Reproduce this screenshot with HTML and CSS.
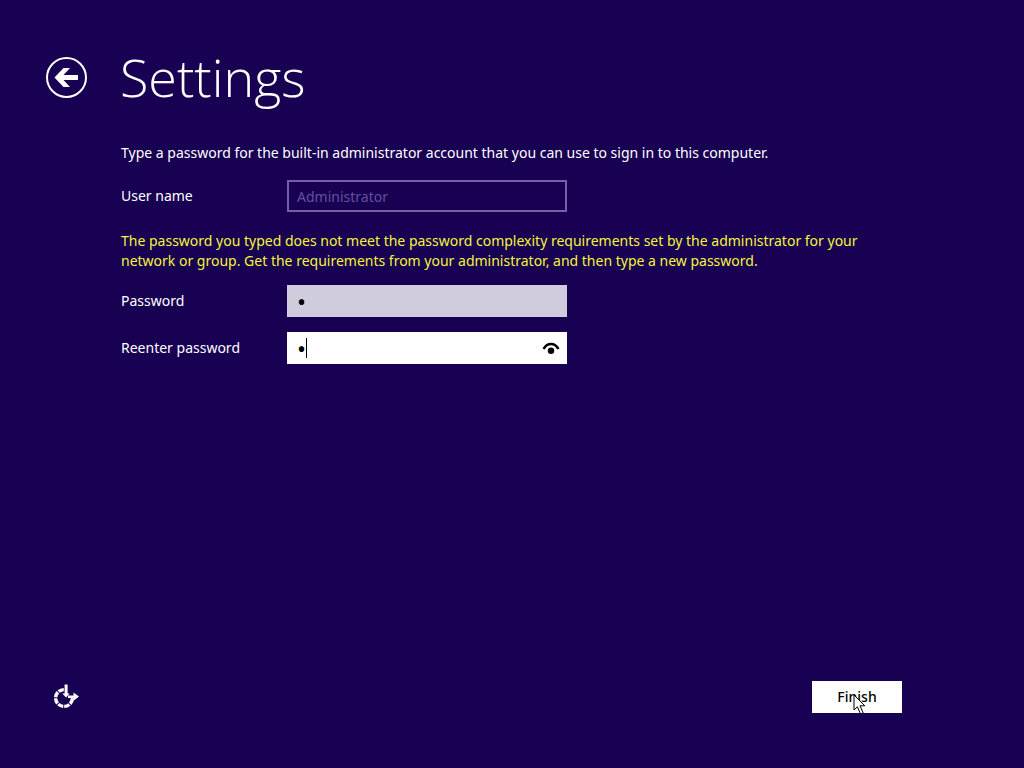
FILE: index.html
```html
<!DOCTYPE html>
<html lang="en">
<head>
    <meta charset="UTF-8">
    <meta name="viewport" content="width=device-width, initial-scale=1.0">
    <title>Settings</title>
    <link rel="stylesheet" href="styles.css">
</head>
<body>
    <form class="page">
        <header class="page-header">
            <button type="button" class="back-button" aria-label="Back">
                <svg width="42" height="42" viewBox="0 0 42 42">
                    <circle cx="21.5" cy="21.5" r="19.5" fill="none" stroke="#fff" stroke-width="2"/>
                    <path d="M9.5 21.5 L18.5 12 H25 L18.5 19 H33 V24 H18.5 L25 31 H18.5 Z" fill="#fff"/>
                </svg>
            </button>
            <h1>Settings</h1>
        </header>

        <main class="content">
            <p class="intro">Type a password for the built-in administrator account that you can use to sign in to this computer.</p>

            <div class="field">
                <label for="userName">User name</label>
                <input type="text" id="userName" value="Administrator" disabled>
            </div>

            <!-- Validation message -->
            <p class="error">The password you typed does not meet the password complexity requirements set by the administrator for your network or group. Get the requirements from your administrator, and then type a new password.</p>

            <div class="field">
                <label for="password">Password</label>
                <input type="password" id="password" value="a">
            </div>
            <div class="field">
                <label for="password2">Reenter password</label>
                <div class="reveal-box">
                    <input type="password" id="password2" class="active" value="a">
                    <span class="caret"></span>
                    <button type="button" class="reveal-button" aria-label="Show password">
                        <svg width="18" height="14" viewBox="0 0 18 14">
                            <path d="M1.6 8 C5 1.4 13 1.4 16.4 8" fill="none" stroke="#000" stroke-width="2.6"/>
                            <circle cx="9" cy="9.8" r="3.2"/>
                        </svg>
                    </button>
                </div>
            </div>
        </main>

        <footer class="page-footer">
            <button type="button" class="access-button" aria-label="Ease of access">
                <svg width="28" height="28" viewBox="0 0 28 28">
                    <!-- dashed ring, open at the upper right -->
                    <circle cx="12" cy="15" r="8.4" fill="none" stroke="#fff" stroke-width="3.4" pathLength="80" stroke-dasharray="8.5 1.5 8.5 1.5 8.5 1.5 8.5 1.5 8.5 1.5 8.5 20.5" transform="rotate(5 12 15)"/>
                    <path d="M12.6 1.5 H15.6 V10.5 H17.6 L14.1 14.5 L10.2 10.5 H12.6 Z" fill="#fff"/>
                    <path d="M16 12.4 H21.5 V9.4 L27 13.6 L21.5 17.8 V15 H16 Z" fill="#fff"/>
                </svg>
            </button>
            <button type="button" class="finish-button">Finish
                <svg class="pointer" width="13" height="21" viewBox="0 0 13 21">
                    <path d="M1 1 V16 L4.4 12.8 L7.6 20 L10.2 18.9 L7 11.8 H11.8 Z" fill="#fff" stroke="#000"/>
                </svg>
            </button>
        </footer>
    </form>
</body>
</html>
```
FILE: styles.css
```css
* {
    box-sizing: border-box;
}

body {
    margin: 0;
    background-color: #180052;
    color: #fff;
    font-family: "Noto Sans", "Open Sans", sans-serif;
    font-size: 14px;
    line-height: 20px;
}

.page {
    display: flex;
    flex-direction: column;
    min-height: 100vh;
    padding: 42px 122px 55px 45px;
}

.page-header {
    display: flex;
    align-items: center;
    gap: 33px;
    margin-bottom: 31px;
}

h1 {
    margin: 0;
    font-family: "Open Sans", sans-serif;
    font-size: 52px;
    font-weight: 300;
    line-height: 70px;
}

button {
    display: flex;
    align-items: center;
    justify-content: center;
    padding: 0;
    border: none;
    background: none;
    font: inherit;
    cursor: pointer;
}

.content {
    flex: 1;
    padding-left: 76px;
}

.intro {
    margin: 0 0 17px;
}

.field {
    display: flex;
    align-items: center;
    margin-bottom: 15px;
}

.field label {
    width: 166px;
}

.field input {
    width: 280px;
    height: 32px;
    padding: 0 8px;
    border: 2px solid #d0cbdd;
    border-radius: 0;
    outline: none;
    background-color: #d0cbdd;
    color: #000;
    font: inherit;
}

.field input[type="password"] {
    font-size: 24px;
}

.field input:disabled {
    border-color: #7560a8;
    background-color: transparent;
    color: #6650a0;
}

.field input.active {
    border-color: #fff;
    background-color: #fff;
}

.error {
    max-width: 750px;
    margin: 19px 0 14px;
    color: #f5f53c;
}

.reveal-box {
    position: relative;
}

.caret {
    position: absolute;
    top: 6px;
    left: 19px;
    width: 1px;
    height: 20px;
    background-color: #000;
}

.reveal-button {
    position: absolute;
    top: 0;
    right: 0;
    width: 32px;
    height: 32px;
}

.page-footer {
    display: flex;
    align-items: center;
    justify-content: space-between;
    padding-left: 7px;
}

.finish-button {
    position: relative;
    width: 90px;
    height: 32px;
    background-color: #fff;
    color: #000;
    font-weight: 500;
}

.pointer {
    position: absolute;
    top: 13px;
    left: 41px;
}
```
